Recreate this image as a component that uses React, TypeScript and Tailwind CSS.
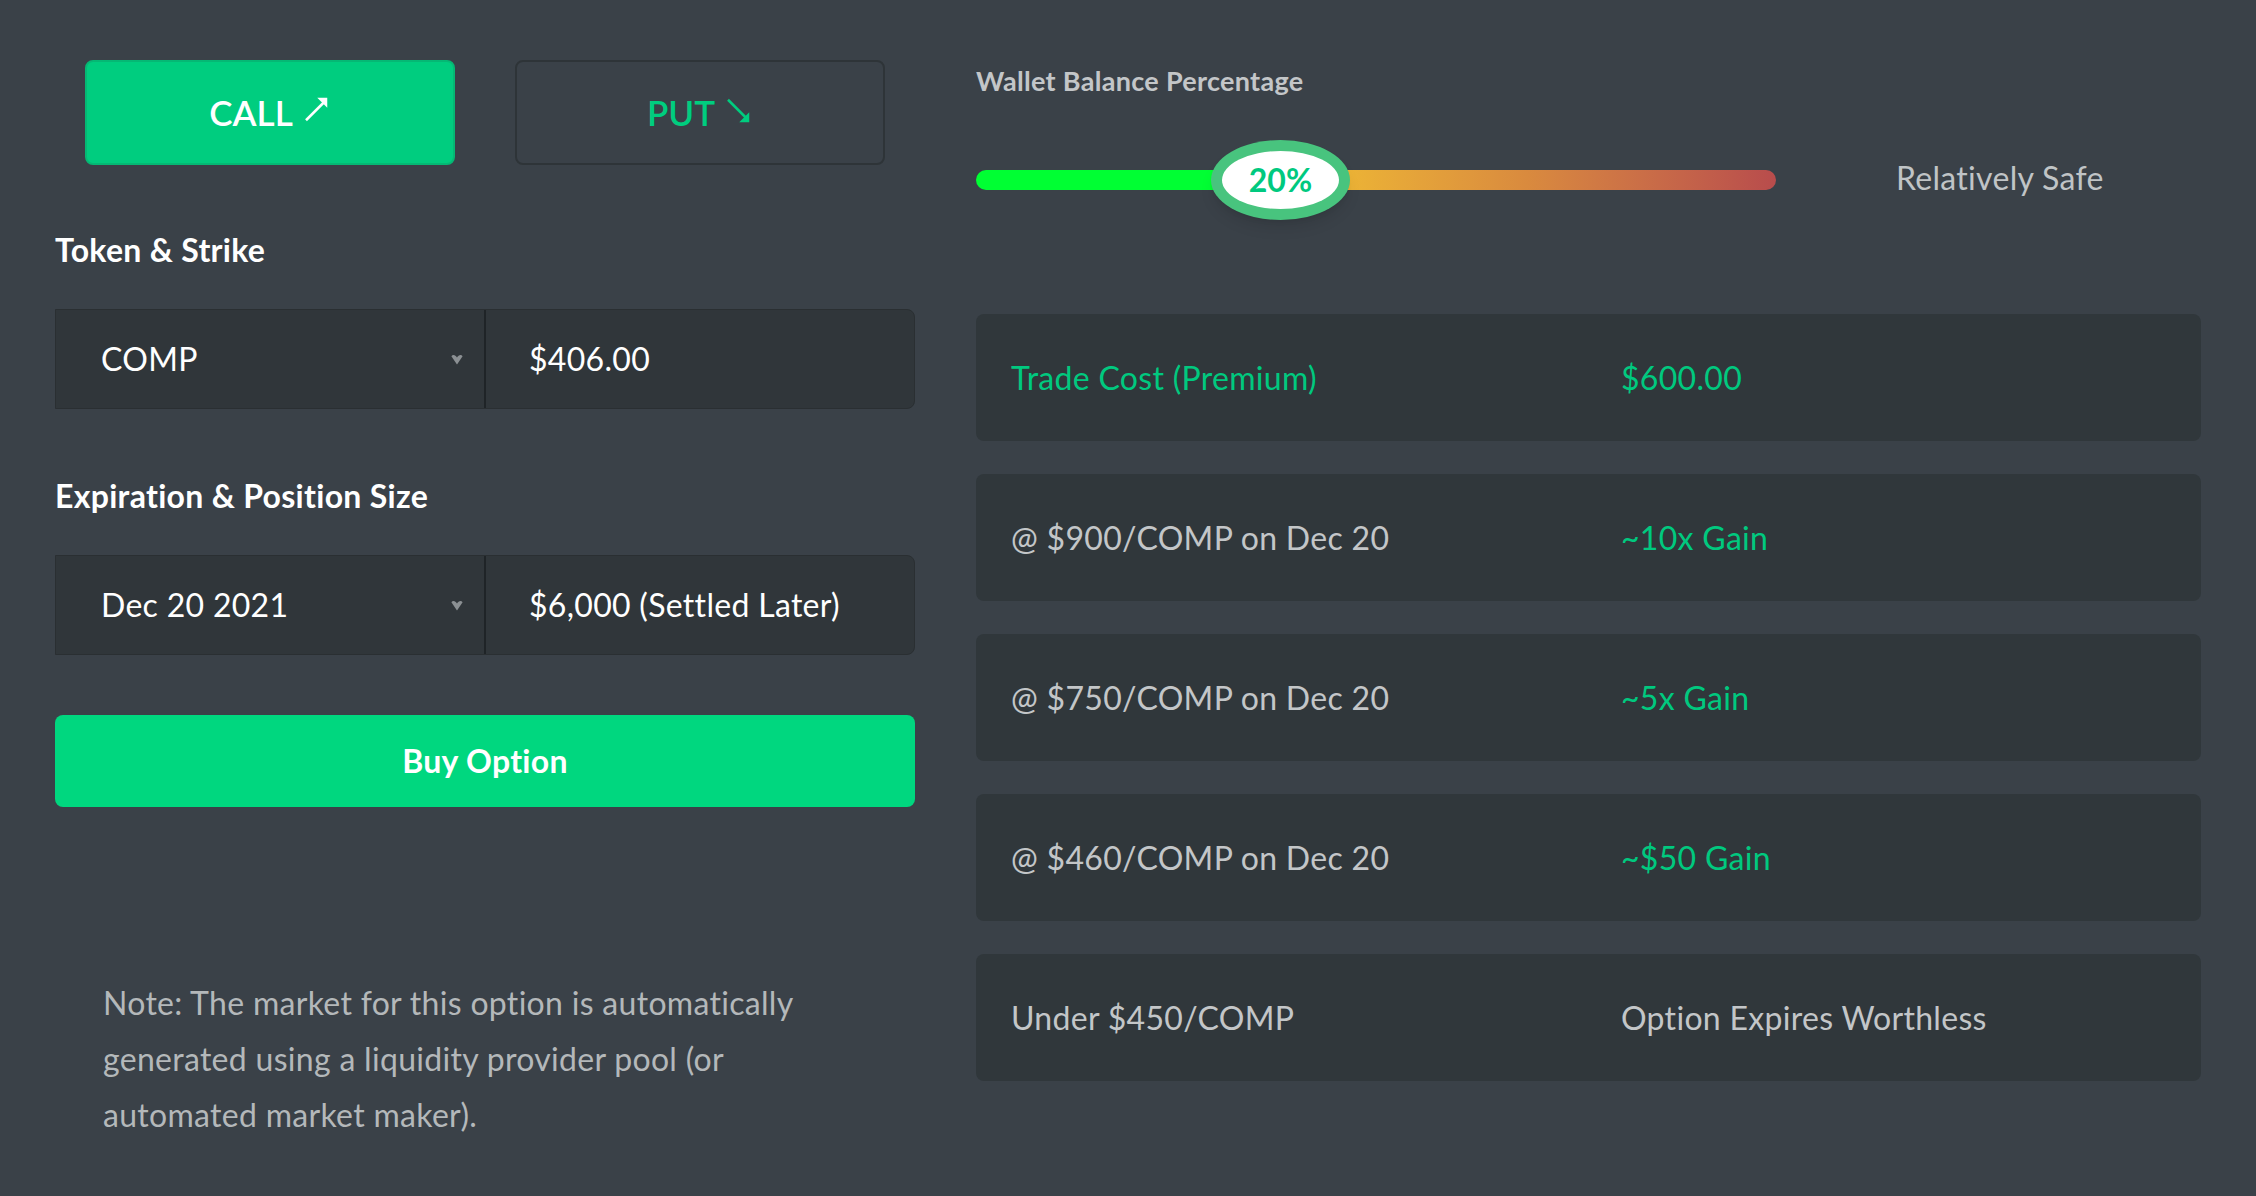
import React from 'react';

const font = { fontFamily: 'Lato, "Noto Sans", sans-serif' };

const ArrowUp = ({ className }: { className?: string }) => (
  <svg viewBox="0 0 24 24" className={className} fill="none">
    <line x1="4" y1="21" x2="19" y2="6" stroke="currentColor" strokeWidth="2" />
    <polygon points="21,3 21,11 13,3" fill="currentColor" />
  </svg>
);

const ArrowDown = ({ className }: { className?: string }) => (
  <svg viewBox="0 0 24 24" className={className} fill="none">
    <line x1="4" y1="3" x2="19" y2="18" stroke="currentColor" strokeWidth="2" />
    <polygon points="21,21 21,13 13,21" fill="currentColor" />
  </svg>
);

const Caret = () => (
  <svg viewBox="0 0 10 10" className="w-[14px] h-[14px] text-[#8b9093]">
    <path d="M1 3 C2 1.5 4 2 5 4 C6 2 8 1.5 9 3 L5 9 Z" fill="currentColor" />
  </svg>
);

const InputGroup = ({ left, right }: { left: string; right: string }) => (
  <div className="flex h-[100px] bg-[#30363a] border border-[#2a2f32] rounded-r-lg">
    <div className="w-[430px] flex items-center justify-between pl-[45px] pr-[20px] border-r-2 border-[#1f2427]">
      <span className="text-[32px] tracking-[0.3px] text-white">{left}</span>
      <Caret />
    </div>
    <div className="flex-1 flex items-center pl-[43px]">
      <span className="text-[32px] tracking-[0.3px] text-white">{right}</span>
    </div>
  </div>
);

const rows = [
  { label: 'Trade Cost (Premium)', value: '$600.00', labelGreen: true, valueGreen: true },
  { label: '@ $900/COMP on Dec 20', value: '~10x Gain', labelGreen: false, valueGreen: true },
  { label: '@ $750/COMP on Dec 20', value: '~5x Gain', labelGreen: false, valueGreen: true },
  { label: '@ $460/COMP on Dec 20', value: '~$50 Gain', labelGreen: false, valueGreen: true },
  { label: 'Under $450/COMP', value: 'Option Expires Worthless', labelGreen: false, valueGreen: false },
];

export default function App() {
  return (
    <div className="w-full h-[1196px] bg-[#3a4148] flex pl-[55px] pt-[60px] gap-[61px]" style={font}>
      {/* Left column */}
      <div className="w-[860px] flex flex-col">
        <div className="grid grid-cols-2 gap-[60px] px-[30px]">
          <button className="h-[105px] rounded-lg bg-[#00cd7f] border-2 border-[#05b874] flex items-center justify-center gap-2 text-white text-[35px] font-semibold">
            CALL <ArrowUp className="w-[30px] h-[30px] -mt-2" />
          </button>
          <button className="h-[105px] rounded-lg bg-[#3a4148] border-2 border-[#2e3438] flex items-center justify-center gap-2 text-[#00cd7f] text-[35px] font-semibold">
            PUT <ArrowDown className="w-[30px] h-[30px] -mt-1" />
          </button>
        </div>

        <div className="mt-[65px] text-[32px] tracking-[0.3px] leading-[40px] font-bold text-white">Token &amp; Strike</div>
        <div className="mt-[39px]">
          <InputGroup left="COMP" right="$406.00" />
        </div>

        <div className="mt-[67px] text-[32px] tracking-[0.3px] leading-[40px] font-bold text-white">Expiration &amp; Position Size</div>
        <div className="mt-[39px]">
          <InputGroup left="Dec 20 2021" right="$6,000 (Settled Later)" />
        </div>

        <button className="mt-[60px] h-[92px] rounded-lg bg-[#00d77f] text-white text-[32px] tracking-[0.3px] font-bold">
          Buy Option
        </button>

        <p className="mt-[168px] ml-[48px] w-[720px] text-[32px] tracking-[0.3px] leading-[56px] text-[#b4b8ba]">
          Note: The market for this option is automatically generated using a liquidity provider pool (or automated market maker).
        </p>
      </div>

      {/* Right column */}
      <div className="w-[1225px] flex flex-col">
        <div className="mt-[5px] text-[27px] tracking-[0.3px] leading-[32px] font-bold text-[#c3c6c8]">Wallet Balance Percentage</div>

        <div className="mt-[43px] flex items-center h-[80px]">
          <div className="relative w-[800px] h-[20px] rounded-full flex">
            <div className="w-[304px] h-full rounded-l-full bg-[#00ff33]" />
            <div className="flex-1 h-full rounded-r-full bg-gradient-to-r from-[#f2c230] via-[#d98a3e] to-[#b84c4c]" />
            <div className="absolute left-[235px] top-[-30px] w-[139px] h-[80px] rounded-[50%] bg-[#48c47e] flex items-center justify-center shadow-lg">
              <div className="w-[117px] h-[58px] rounded-[50%] bg-white flex items-center justify-center">
                <span className="text-[32px] font-bold text-[#00c97f]">20%</span>
              </div>
            </div>
          </div>
          <span className="ml-[120px] -mt-[4px] text-[32px] tracking-[0.3px] text-[#c0c4c6]">Relatively Safe</span>
        </div>

        <div className="mt-[94px] flex flex-col gap-[33px]">
          {rows.map((r) => (
            <div key={r.label} className="h-[127px] rounded-lg bg-[#30373b] flex items-center pl-[35px]">
              <span className={`w-[610px] text-[32px] tracking-[0.3px] ${r.labelGreen ? 'text-[#00c97f]' : 'text-[#c3c6c8]'}`}>{r.label}</span>
              <span className={`text-[32px] tracking-[0.3px] ${r.valueGreen ? 'text-[#00c97f]' : 'text-[#c3c6c8]'}`}>{r.value}</span>
            </div>
          ))}
        </div>
      </div>
    </div>
  );
}
